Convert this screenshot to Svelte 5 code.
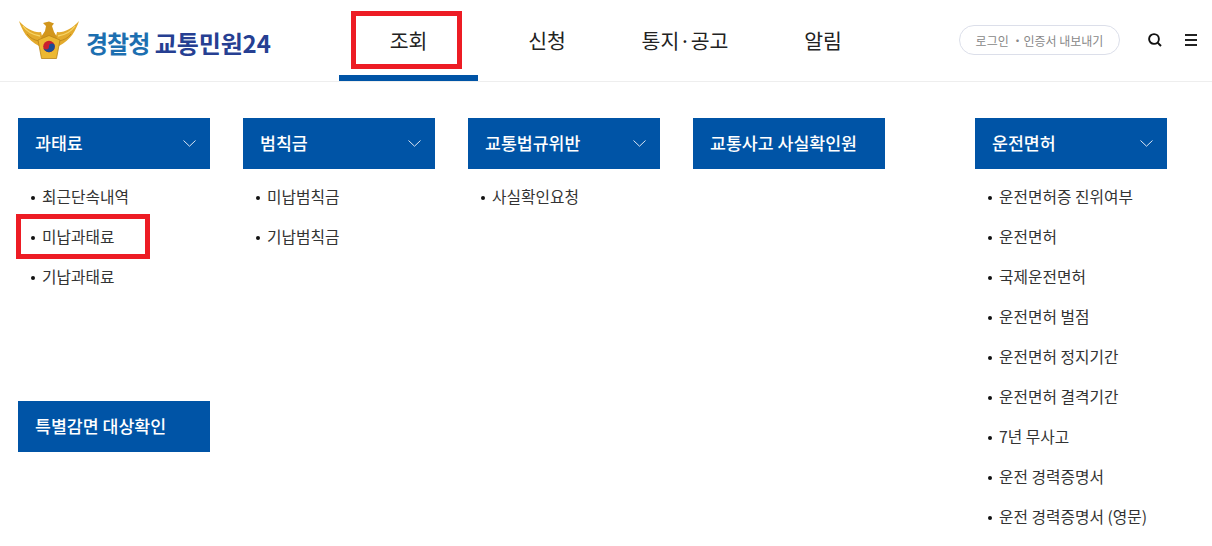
<script>
	const nav = ['조회', '신청', '통지·공고', '알림'];

	const columns = [
		{
			groups: [
				{ title: '과태료', arrow: true, items: ['최근단속내역', '미납과태료', '기납과태료'] },
				{ title: '특별감면 대상확인', arrow: false, items: [] }
			]
		},
		{ groups: [{ title: '범칙금', arrow: true, items: ['미납범칙금', '기납범칙금'] }] },
		{ groups: [{ title: '교통법규위반', arrow: true, items: ['사실확인요청'] }] },
		{ groups: [{ title: '교통사고 사실확인원', arrow: false, items: [] }] },
		{
			groups: [
				{
					title: '운전면허',
					arrow: true,
					items: [
						'운전면허증 진위여부',
						'운전면허',
						'국제운전면허',
						'운전면허 벌점',
						'운전면허 정지기간',
						'운전면허 결격기간',
						'7년 무사고',
						'운전 경력증명서',
						'운전 경력증명서 (영문)'
					]
				}
			]
		}
	];
</script>

<div class="page">
	<header class="header">
		<a class="logo" href="#top">
			<svg class="emblem" viewBox="0 0 60 39" width="60" height="39" aria-hidden="true">
				<path d="M0 1 C3 10 8 20 20 26 L24 20 L22 12 C16 13 7 9 0 1Z" fill="#e3aa2c" />
				<path d="M60 1 C57 10 52 20 40 26 L36 20 L38 12 C44 13 53 9 60 1Z" fill="#e3aa2c" />
				<path d="M24 3 L30 1.5 L35 3.5 L33 6 L35 12 L38 17 L36 22 L24 22 L22 17 L26 11 L27 6Z" fill="#d2961c" />
				<path d="M4 6 C8 12 15 15 21 16 M56 6 C52 12 45 15 39 16" fill="none" stroke="#f6d465" stroke-width="1.3" />
				<path d="M8 14 C11 18 15 20 20 21 M52 14 C49 18 45 20 40 21" fill="none" stroke="#b98318" stroke-width="0.8" />
				<path d="M19 20 L30 15.5 L41 20 L37.5 38.5 L22.5 38.5Z" fill="#ecb832" stroke="#b98318" stroke-width="0.8" />
				<circle cx="30" cy="26.5" r="5.8" fill="#c8202f" />
				<path d="M24.2 26.5 A5.8 5.8 0 0 0 35.8 26.5 A2.9 2.9 0 0 0 30 26.5 A2.9 2.9 0 0 1 24.2 26.5Z" fill="#1c4d96" />
			</svg>
			<span class="logo-text"><span class="logo-a">경찰청</span> <span class="logo-b">교통민원24</span></span>
		</a>

		<nav class="nav">
			{#each nav as label, i}
				<a class="nav-item" class:active={i === 0} href="#top">{label}</a>
			{/each}
		</nav>

		<div class="tools">
			<button class="pill">로그인 ・인증서 내보내기</button>
			<svg class="search" viewBox="0 0 16 16" width="16" height="16" aria-hidden="true">
				<circle cx="7" cy="7" r="4.9" fill="none" stroke="#111" stroke-width="1.9" />
				<path d="M10.6 10.6 L14 14" stroke="#111" stroke-width="2" />
			</svg>
			<span class="burger" aria-hidden="true"><i></i><i></i><i></i></span>
		</div>

		<span class="mark mark-nav"></span>
	</header>

	<main class="menu">
		{#each columns as col}
			<section class="col">
				{#each col.groups as g}
					<div class="group">
						<h2 class="title">
							{g.title}
							{#if g.arrow}
								<svg class="chev" viewBox="0 0 13 7" width="13" height="7" aria-hidden="true">
									<path d="M0.5 0.5 L6.5 6.2 L12.5 0.5" fill="none" stroke="#dbe6f3" stroke-width="1" />
								</svg>
							{/if}
						</h2>
						{#if g.items.length}
							<ul class="list">
								{#each g.items as item}
									<li>{item}</li>
								{/each}
							</ul>
						{/if}
					</div>
				{/each}
			</section>
		{/each}
		<span class="mark mark-item"></span>
	</main>
</div>

<style>
	:global(body) {
		margin: 0;
		background: #fff;
	}

	.page {
		position: relative;
		height: 546px;
		overflow: hidden;
		font-family: 'Noto Sans CJK KR', 'Noto Sans', sans-serif;
		color: #222;
	}

	.header {
		position: relative;
		display: flex;
		align-items: center;
		height: 81px;
		border-bottom: 1px solid #eee;
		box-sizing: content-box;
	}

	.logo {
		display: flex;
		align-items: center;
		gap: 8px;
		width: 339px;
		padding-left: 19px;
		box-sizing: border-box;
		text-decoration: none;
		flex-shrink: 0;
		margin-top: 1px;
	}

	.emblem {
		margin-top: -3px;
	}

	.logo-text {
		font-size: 24px;
		font-weight: 700;
		white-space: nowrap;
		margin-top: 2px;
		margin-left: -1px;
	}

	.logo-a {
		color: #1d6fb0;
		letter-spacing: -1px;
	}

	.logo-b {
		color: #263f92;
		letter-spacing: -0.1px;
	}

	.nav {
		display: flex;
		height: 100%;
		width: 556px;
		flex-shrink: 0;
	}

	.nav-item {
		width: 138px;
		box-sizing: border-box;
		display: flex;
		align-items: center;
		justify-content: center;
		padding-top: 4px;
		font-size: 20.5px;
		color: #222;
		text-decoration: none;
		white-space: nowrap;
		border-bottom: 6px solid transparent;
	}

	.nav-item.active {
		width: 139px;
		border-bottom-color: #0054a6;
	}

	.tools {
		display: flex;
		align-items: center;
		margin-left: 64px;
		margin-top: -1px;
	}

	.pill {
		width: 161px;
		height: 30px;
		padding: 0;
		border: 1px solid #dcdfea;
		border-radius: 15px;
		background: #fff;
		font: inherit;
		font-size: 12px;
		color: #888;
		white-space: nowrap;
	}

	.search {
		margin-left: 27px;
	}

	.burger {
		display: flex;
		flex-direction: column;
		gap: 3px;
		width: 12px;
		margin-left: 22px;
	}

	.burger i {
		display: block;
		height: 2px;
		background: #222;
	}

	.mark {
		position: absolute;
		box-sizing: border-box;
		border: 5px solid #ed1c24;
		pointer-events: none;
	}

	.mark-nav {
		left: 351px;
		top: 11px;
		width: 111px;
		height: 58px;
	}

	.mark-item {
		left: 16px;
		top: 132px;
		width: 134px;
		height: 45px;
	}

	.menu {
		position: relative;
		display: flex;
		gap: 33px;
		padding: 36px 45px 0 18px;
	}

	.col {
		width: 192px;
		flex-shrink: 0;
	}

	.col:last-of-type {
		margin-left: auto;
	}

	.group + .group {
		margin-top: 104px;
	}

	.title {
		position: relative;
		display: flex;
		align-items: center;
		height: 51px;
		margin: 0;
		padding: 0 17px 2px;
		box-sizing: border-box;
		background: #0054a6;
		color: #fff;
		font-size: 17.3px;
		font-weight: 500;
		white-space: nowrap;
	}

	.chev {
		margin-left: auto;
		margin-right: -3px;
		margin-top: 2px;
	}

	.list {
		list-style: none;
		margin: 0;
		padding: 8px 0 0;
	}

	.list li {
		position: relative;
		height: 40px;
		line-height: 40px;
		padding-left: 24px;
		font-size: 15.75px;
		color: #333;
		white-space: nowrap;
	}

	.list li::before {
		content: '';
		position: absolute;
		left: 13px;
		top: 19px;
		width: 4px;
		height: 4px;
		border-radius: 50%;
		background: #111;
	}
</style>
